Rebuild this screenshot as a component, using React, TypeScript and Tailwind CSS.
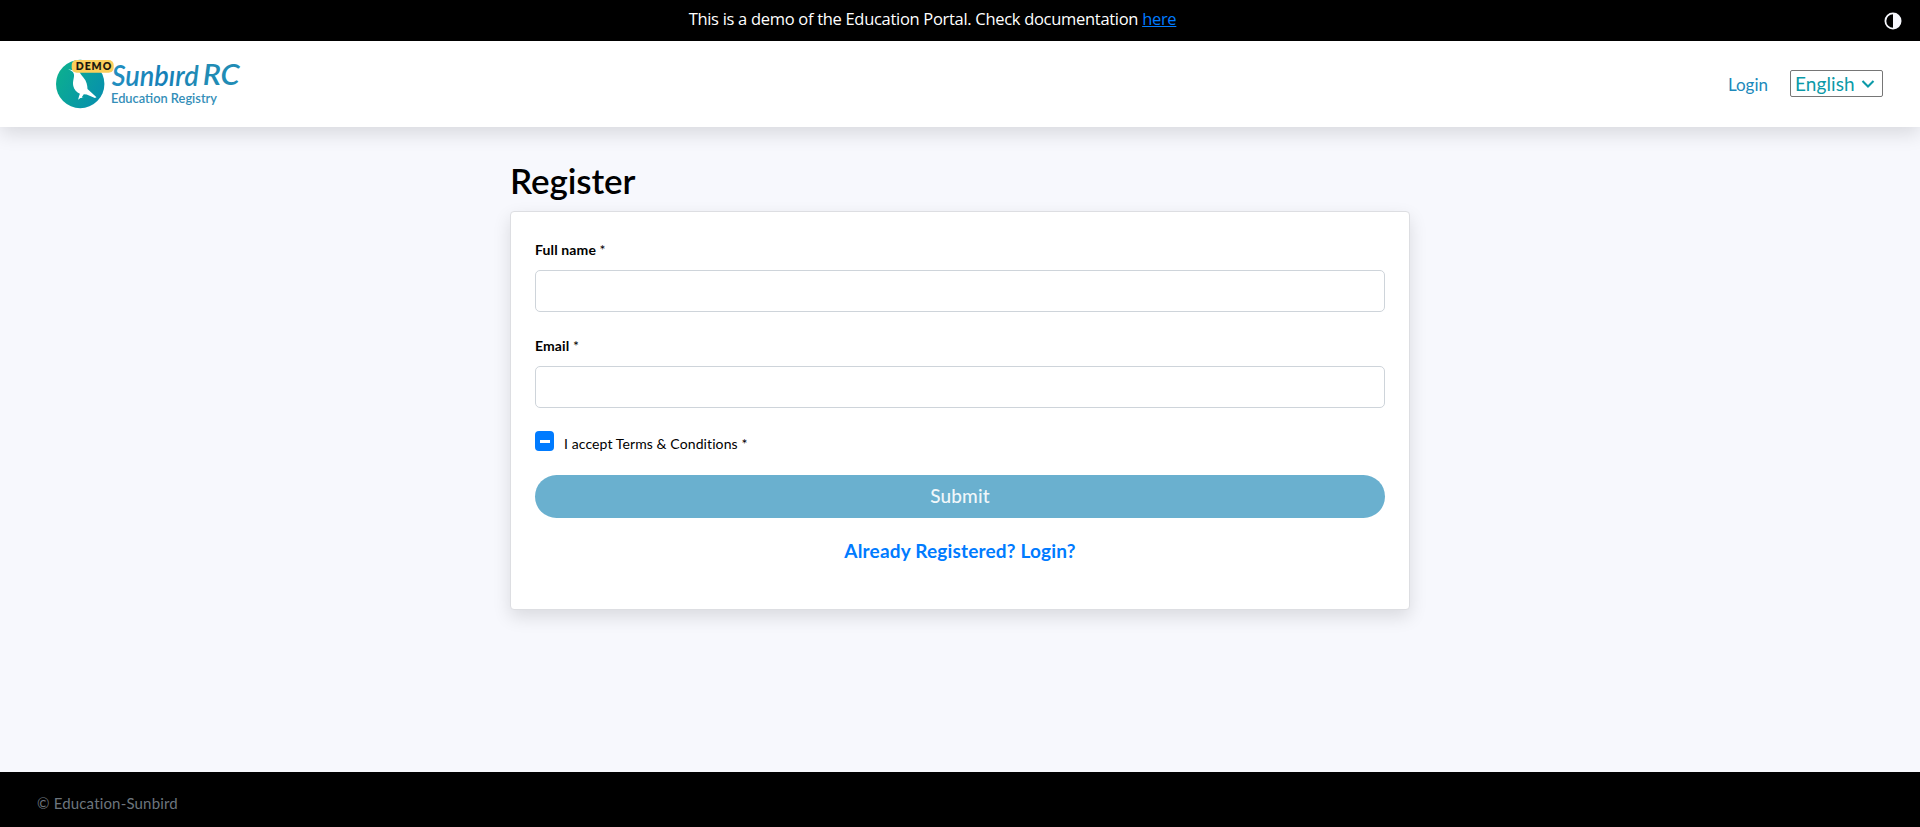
import React from 'react';

function ContrastIcon() {
  return (
    <svg viewBox="0 0 18 18" className="h-[18px] w-[18px]" aria-label="Toggle contrast">
      <circle cx="9" cy="9" r="7.6" fill="none" stroke="#f7f8fd" strokeWidth="1.8" />
      <path d="M9 1.4a7.6 7.6 0 0 1 0 15.2z" fill="#f7f8fd" />
    </svg>
  );
}

function Logo() {
  return (
    <svg viewBox="0 0 190 60" className="h-[60px] w-[190px] overflow-visible" role="img">
      <defs>
        <linearGradient id="disc" x1="0" y1="0.2" x2="1" y2="0.8">
          <stop offset="0" stopColor="#0cb08f" />
          <stop offset="1" stopColor="#078fae" />
        </linearGradient>
        <linearGradient id="word" x1="0" y1="0" x2="1" y2="0">
          <stop offset="0" stopColor="#2390c0" />
          <stop offset="0.6" stopColor="#1480b8" />
          <stop offset="1" stopColor="#218cb5" />
        </linearGradient>
      </defs>
      <g transform="translate(-0.3 5.5)">
        <circle cx="24.500" cy="24.500" r="24.200" fill="url(#disc)" />
        <path
          d="M12.500 9.700l5.800 1.200c1.400-.9 3.800-.6 5 .9 1.200 1.900 2.300 3.900 4.400 6.300 3.300 3.600 3.900 7.800 4.100 11.300l9 8.300-1.600.9-8.200-3.600-2.900-.3-2.200 3.200 2.100.7-3.300 0-2.300 1.700.9-3.600.9-2.400c-3.200-1.600-5.900-4.200-6.600-7.900-.9-4.500.9-7.300.7-11.200-.2-2.400-1.500-3.600-5.800-5.500z"
          fill="#fff"
        />
        <rect x="16" y="0.500" width="42" height="12.800" rx="5" fill="#fbcf5b" />
        <text x="20" y="10.400" textLength="35.500" fontSize="10.500" fontWeight="800" fontFamily="Lato, sans-serif" fill="#1d1a10">DEMO</text>
        <text x="56" y="26.500" textLength="87" lengthAdjust="spacingAndGlyphs" fontSize="29" fontWeight="600" fontStyle="italic" fontFamily="Lato, sans-serif" fill="url(#word)">Sunbırd</text>
        <text x="147" y="25" textLength="37" lengthAdjust="spacingAndGlyphs" fontSize="29" fontWeight="600" fontStyle="italic" fontFamily="Lato, sans-serif" fill="#218cb5">RC</text>
        <text x="55.300" y="43.300" textLength="106" lengthAdjust="spacingAndGlyphs" fontSize="13.500" fontWeight="600" fontFamily="Lato, sans-serif" fill="#338eb8">Education Registry</text>
      </g>
    </svg>
  );
}

function Field({ label }: { label: string }) {
  return (
    <label className="block">
      <span className="block h-[31px] text-[14px] leading-[21px] font-bold tracking-[0.12px]">
        {label} <span className="font-normal">*</span>
      </span>
      <input className="block h-[42px] w-full rounded-[5px] border border-[#ced4da] bg-white px-3 outline-none" />
    </label>
  );
}

export default function App() {
  return (
    <div className="flex h-[827px] flex-col bg-[#f7f8fd] font-[Lato,sans-serif] text-black [font-variant-ligatures:no-common-ligatures]">
      <div className="flex h-[41px] shrink-0 items-center bg-black pr-[18px]">
        <p className="flex-1 pr-[19px] pb-[3px] text-center font-['Open_Sans',sans-serif] text-[16.5px] leading-6 tracking-[-0.3px] text-white">
          This is a demo of the Education Portal. Check documentation{' '}
          <a className="text-[#007bff] underline">here</a>
        </p>
        <ContrastIcon />
      </div>

      <header className="relative flex h-[86px] shrink-0 items-center justify-between bg-white pr-[37px] pl-[56px] shadow-[0_7px_18px_rgba(0,0,0,0.12)]">
        <div className="[font-variant-ligatures:normal]">
          <Logo />
        </div>
        <nav className="flex items-center gap-[22px] pb-[1px]">
          <a className="pt-[3px] text-[17px] leading-6 text-[#2089bb]">Login</a>
          <button className="flex h-[27px] w-[93px] items-center rounded-[2px] border border-[#767676] pl-[4px] text-[19px] leading-6 tracking-[0.1px] text-[#0b9aa8]">
            <span className="w-[61px] text-left">English</span>
            <svg viewBox="0 0 14 10" className="ml-[5px] h-[10px] w-[14px]" fill="none" stroke="currentColor" strokeWidth="2.100">
              <path d="M1.500 2l5.500 5.500L12.500 2" />
            </svg>
          </button>
        </nav>
      </header>

      <main className="flex flex-1 flex-col items-center pt-[32px]">
        <div className="w-[900px]">
          <h1 className="h-[52px] text-[35px] leading-[42px] font-semibold tracking-[-0.1px]">Register</h1>
          <form className="flex h-[399px] flex-col rounded-[4px] border border-[#dddee2] bg-white px-[24px] pt-[27px] shadow-[0_7px_18px_rgba(0,0,0,0.12)]">
            <Field label="Full name" />
            <div className="h-[23px]" />
            <Field label="Email" />
            <div className="mt-[23px] flex h-[44px] items-start">
              <span className="flex h-[20px] w-[19px] items-center justify-center rounded-[4px] bg-[#007bff]">
                <span className="h-[3px] w-[10px] bg-white" />
              </span>
              <span className="ml-[10px] pt-[2px] text-[14px] leading-[21px] tracking-[0.1px]">I accept Terms &amp; Conditions *</span>
            </div>
            <button type="button" className="h-[43px] shrink-0 rounded-full bg-[#6ab0cf] pb-[1px] text-[19px] font-medium tracking-[0.15px] text-[#f0f7fa]">
              Submit
            </button>
            <a className="mt-[19px] text-center text-[19px] leading-[28px] font-bold tracking-[0.18px] text-[#007bff]">
              Already Registered? Login?
            </a>
          </form>
        </div>
      </main>

      <footer className="flex h-[55px] shrink-0 items-center bg-black pt-[8px] pl-[37px] text-[15px] tracking-[0.17px] text-[#6c757d]">
        © Education-Sunbird
      </footer>
    </div>
  );
}
